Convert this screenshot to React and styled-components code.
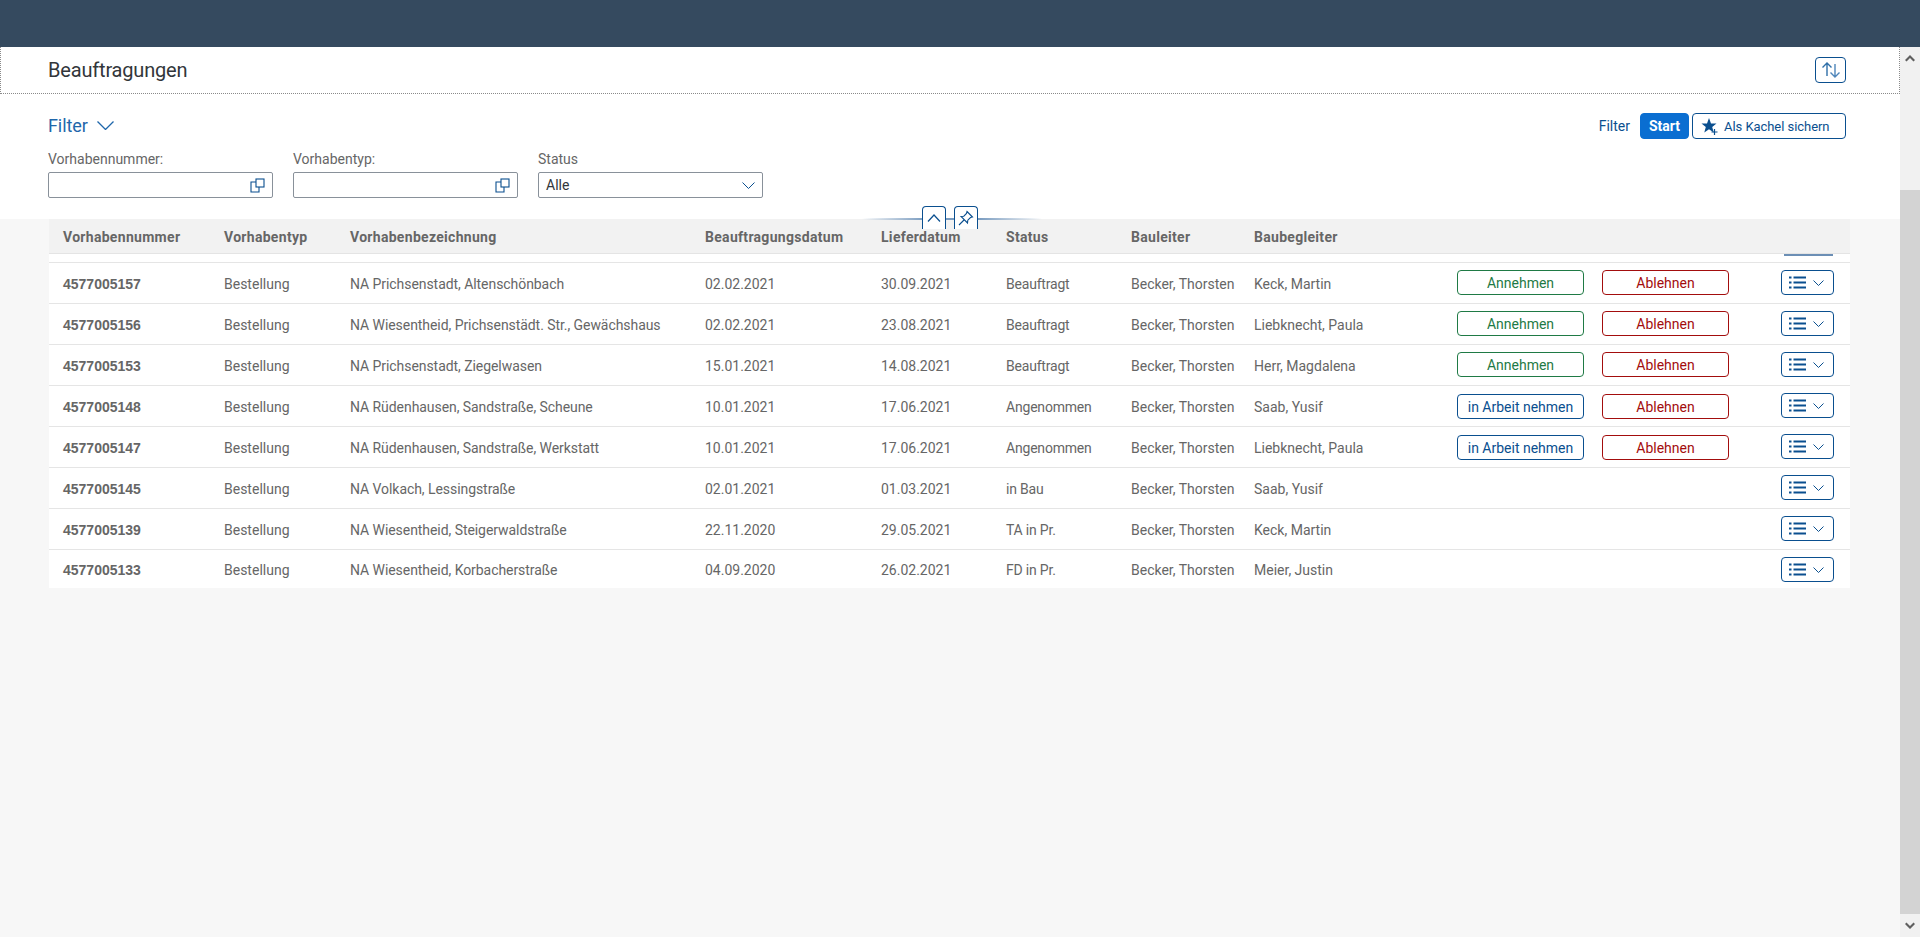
import React from "react";
import styled, { createGlobalStyle } from "styled-components";

const Global = createGlobalStyle`
  html, body { margin: 0; padding: 0; height: 100%; overflow: hidden; }
  body { font-family: "Roboto", "Liberation Sans", sans-serif; background: #f7f7f7; color: #32363a; }
  #root { height: 100%; }
  * { box-sizing: border-box; }
`;

const Page = styled.div`height: 937px; display: flex; flex-direction: column;`;
const Shell = styled.div`height: 47px; background: #354a5f; flex: none;`;
const Body = styled.div`flex: 1; display: flex; min-height: 0;`;
const Main = styled.main`flex: 1; min-width: 0; display: flex; flex-direction: column;`;

const Scrollbar = styled.div`width: 20px; background: #f1f1f1; display: flex; flex-direction: column; flex: none;`;
const ScrollBtn = styled.div`height: 23px; display: flex; align-items: center; justify-content: center; flex: none;`;
const ScrollSpace = styled.div`height: 120px; flex: none;`;
const Thumb = styled.div`flex: 1; background: #d3d3d3;`;

const TitleBar = styled.header`
  height: 47px; background: #fff; padding: 0 53px 0 47px; flex: none;
  display: flex; align-items: center; justify-content: space-between;
  border: 1px dotted #8a8a8a; border-top: none;
`;
const Title = styled.h1`margin: 0; font-size: 20px; font-weight: 400; color: #32363a; letter-spacing: -0.18px;`;
const IconButton = styled.button`
  width: 31px; height: 26px; padding: 0; background: #fff; border: 1px solid #0a4f8f; border-radius: 4px;
  display: flex; align-items: center; justify-content: center;
`;

const FilterBar = styled.section`background: #fff; height: 125px; padding: 19px 54px 0 48px; flex: none;`;
const FilterTop = styled.div`display: flex; align-items: center; justify-content: space-between; height: 26px;`;
const FilterHead = styled.div`display: flex; align-items: center; gap: 9px; font-size: 18px; color: #1f67ab; letter-spacing: -0.1px; margin-top: -1px;`;
const FilterActions = styled.div`display: flex; align-items: center; font-size: 14px;`;
const FilterLink = styled.span`color: #0a4f8f; margin-right: 10px;`;
const Start = styled.button`
  width: 49px; height: 26px; background: #0a6ed1; color: #fff; border: 1px solid #0a6ed1; border-radius: 4px;
  font: 700 14px "Roboto", sans-serif; padding: 0; margin-right: 3px;
`;
const TileButton = styled.button`
  width: 154px; height: 26px; background: #fff; color: #0a4f8f; border: 1px solid #0a4f8f; border-radius: 4px;
  font: 400 13px "Roboto", sans-serif; letter-spacing: -0.05px; padding: 0 0 0 8px; display: flex; align-items: center; gap: 5px;
`;
const Fields = styled.div`display: flex; gap: 20px; margin-top: 10px;`;
const Field = styled.div`width: 225px;`;
const FieldLabel = styled.label`display: block; font-size: 14px; color: #666; line-height: 20px; margin-bottom: 3px;`;
const Input = styled.div`
  height: 26px; border: 1px solid #89919a; border-radius: 2px; background: #fff;
  display: flex; align-items: center; justify-content: space-between; padding: 0 7px 0 7px;
  font-size: 14px; color: #32363a;
`;
const InputEnd = styled.div`margin-left: auto; display: flex;`;

const Content = styled.section`position: relative; flex: 1; padding: 0 50px 0 49px; min-height: 0;`;
const Collapse = styled.aside`
  position: absolute; top: -13px; left: 862px; width: 180px; height: 23px;
  display: flex; justify-content: center; gap: 8px; padding-right: 4px;
  &::before {
    content: ""; position: absolute; left: 0; right: 0; top: 12px; height: 2px;
    background: linear-gradient(90deg, rgba(88,133,180,0), #7a9cc0 35%, #7a9cc0 65%, rgba(88,133,180,0));
  }
`;
const CollapseBtn = styled.button`
  position: relative; width: 24px; height: 23px; padding: 0; background: #fff;
  border: 1px solid #0a4f8f; border-bottom: none; border-radius: 4px 4px 0 0;
  display: flex; align-items: center; justify-content: center;
`;

const Grid = `display: grid; grid-template-columns: 161px 126px 355px 176px 125px 125px 123px 203px 145px 179px 1fr;`;
const HeadRow = styled.div`
  ${Grid}
  height: 35px; background: #f2f2f2; border-bottom: 1px solid #e4e4e4; align-items: center; padding-left: 14px;
  font-size: 14px; font-weight: 700; color: #666; padding-top: 2px; letter-spacing: 0.3px;
`;
const CutRow = styled.div`
  height: 9px; background: #fff; border-bottom: 1px solid #e5e5e5;
  display: flex; justify-content: flex-end; padding-right: 17px;
`;
const CutBtn = styled.div`width: 49px; height: 2px; background: #6c8fb5;`;
const Row = styled.div`
  ${Grid}
  height: 41px; background: #fff; border-bottom: 1px solid #e5e5e5; align-items: center; padding-left: 14px;
  font-size: 14px; color: #666;
  &:last-of-type { border-bottom: none; height: 38px; }
`;
const Cell = styled.div`white-space: nowrap; padding-top: 2px; letter-spacing: ${p => p.$tight || 0}px;`;
const Key = styled(Cell)`font-family: "Liberation Sans", sans-serif; font-weight: 700;`;
const ActionCell = styled.div`display: flex; align-items: flex-start; height: 33px; padding-top: ${p => (p.$low ? 8 : 7)}px; align-self: start;`;
const Action = styled.button`
  width: 127px; height: 25px; background: #fff; border-radius: 4px; padding: 0;
  font: 400 14px "Roboto", sans-serif;
  border: 1px solid ${p => p.$color}; color: ${p => p.$color};
`;
const MenuButton = styled.button`
  width: 53px; height: 25px; background: #fff; border: 1px solid #0a4f8f; border-radius: 4px; padding: 0 0 0 7px;
  display: flex; align-items: center; gap: 7px;
`;

const ListIcon = () => (
  <svg width="17" height="13" viewBox="0 0 17 13" fill="#0a4f8f">
    <rect x="0" y="0.5" width="2.5" height="2" /><rect x="4.5" y="0.5" width="12.5" height="2" />
    <rect x="0" y="5.5" width="2.5" height="2" /><rect x="4.5" y="5.5" width="12.5" height="2" />
    <rect x="0" y="10.5" width="2.5" height="2" /><rect x="4.5" y="10.5" width="12.5" height="2" />
  </svg>
);
const Chevron = ({ w = 11, h = 6, color = "#0a4f8f", sw = 1 }) => (
  <svg width={w} height={h} viewBox={`0 0 ${w} ${h}`} fill="none" stroke={color} strokeWidth={sw}>
    <path d={`M0.5 0.5 L${w / 2} ${h - 0.5} L${w - 0.5} 0.5`} />
  </svg>
);
const ValueHelp = () => (
  <svg width="15" height="15" viewBox="0 0 15 15" fill="none" stroke="#0a4f8f" strokeWidth="1.1">
    <path d="M6 4 H1 V14 H9 V9" /><rect x="6" y="1" width="8" height="8" fill="#fff" />
  </svg>
);

const rows = [
  ["4577005157", "NA Prichsenstadt, Altenschönbach", "02.02.2021", "30.09.2021", "Beauftragt", "Keck, Martin"],
  ["4577005156", "NA Wiesentheid, Prichsenstädt. Str., Gewächshaus", "02.02.2021", "23.08.2021", "Beauftragt", "Liebknecht, Paula"],
  ["4577005153", "NA Prichsenstadt, Ziegelwasen", "15.01.2021", "14.08.2021", "Beauftragt", "Herr, Magdalena"],
  ["4577005148", "NA Rüdenhausen, Sandstraße, Scheune", "10.01.2021", "17.06.2021", "Angenommen", "Saab, Yusif"],
  ["4577005147", "NA Rüdenhausen, Sandstraße, Werkstatt", "10.01.2021", "17.06.2021", "Angenommen", "Liebknecht, Paula"],
  ["4577005145", "NA Volkach, Lessingstraße", "02.01.2021", "01.03.2021", "in Bau", "Saab, Yusif"],
  ["4577005139", "NA Wiesentheid, Steigerwaldstraße", "22.11.2020", "29.05.2021", "TA in Pr.", "Keck, Martin"],
  ["4577005133", "NA Wiesentheid, Korbacherstraße", "04.09.2020", "26.02.2021", "FD in Pr.", "Meier, Justin"],
];
const heads = ["Vorhabennummer", "Vorhabentyp", "Vorhabenbezeichnung", "Beauftragungsdatum", "Lieferdatum", "Status", "Bauleiter", "Baubegleiter"];

const GREEN = "#1f7a45", RED = "#a30d0d", BLUE = "#0a4f8f";

export default function App() {
  return (
    <Page>
      <Global />
      <Shell />
      <Body>
        <Main>
          <TitleBar>
            <Title>Beauftragungen</Title>
            <IconButton aria-label="Sortieren">
              <svg width="22" height="18" viewBox="0 0 22 18" fill="none" strokeWidth="1.4">
                <path d="M7 15 V2 M2.5 6.5 L7 2 L11.5 6.5" stroke="#2f6fa8" />
                <path d="M15 3 V16 M10.5 11.5 L15 16 L19.5 11.5" stroke="#4f86ba" />
              </svg>
            </IconButton>
          </TitleBar>
          <FilterBar>
            <FilterTop>
              <FilterHead>Filter <Chevron w={17} h={9} color="#1f67ab" sw={1.3} /></FilterHead>
              <FilterActions>
                <FilterLink>Filter</FilterLink>
                <Start>Start</Start>
                <TileButton>
                  <svg width="18" height="18" viewBox="0 0 18 18">
                    <path d="M8 1 L10 6.4 L15.5 6.6 L11.2 10 L12.7 15.4 L8 12.3 L3.3 15.4 L4.8 10 L0.5 6.6 L6 6.4 Z" fill="#0a4f8f" />
                    <path d="M13.5 12 V18 M10.5 15 H16.5" stroke="#0a4f8f" strokeWidth="1.2" fill="none" />
                  </svg>
                  Als Kachel sichern
                </TileButton>
              </FilterActions>
            </FilterTop>
            <Fields>
              <Field>
                <FieldLabel>Vorhabennummer:</FieldLabel>
                <Input><InputEnd><ValueHelp /></InputEnd></Input>
              </Field>
              <Field>
                <FieldLabel>Vorhabentyp:</FieldLabel>
                <Input><InputEnd><ValueHelp /></InputEnd></Input>
              </Field>
              <Field>
                <FieldLabel>Status</FieldLabel>
                <Input>Alle <Chevron w={13} h={7} /></Input>
              </Field>
            </Fields>
          </FilterBar>
          <Content>
            <HeadRow>{heads.map(h => <div key={h}>{h}</div>)}</HeadRow>
            <CutRow><CutBtn /></CutRow>
            {rows.map((r) => {
              const accepted = r[4] === "Angenommen";
              const open = r[4] === "Beauftragt";
              return (
                <Row key={r[0]}>
                  <Key>{r[0]}</Key>
                  <Cell>Bestellung</Cell>
                  <Cell $tight={-0.06}>{r[1]}</Cell>
                  <Cell>{r[2]}</Cell>
                  <Cell>{r[3]}</Cell>
                  <Cell $tight={-0.2}>{r[4]}</Cell>
                  <Cell>Becker, Thorsten</Cell>
                  <Cell>{r[5]}</Cell>
                  <ActionCell $low={accepted}>
                    {open && <Action $color={GREEN}>Annehmen</Action>}
                    {accepted && <Action $color={BLUE}>in Arbeit nehmen</Action>}
                  </ActionCell>
                  <ActionCell $low={accepted}>
                    {(open || accepted) && <Action $color={RED}>Ablehnen</Action>}
                  </ActionCell>
                  <ActionCell>
                    <MenuButton aria-label="Menü"><ListIcon /><Chevron w={11} h={6} /></MenuButton>
                  </ActionCell>
                </Row>
              );
            })}
            <Collapse>
              <CollapseBtn aria-label="Einklappen">
                <svg width="14" height="8" viewBox="0 0 14 8" fill="none" stroke="#0a4f8f" strokeWidth="1.2"><path d="M1 7.5 L7 1 L13 7.5" /></svg>
              </CollapseBtn>
              <CollapseBtn aria-label="Anheften">
                <svg width="16" height="16" viewBox="0 0 16 16" fill="none" stroke="#0a4f8f" strokeWidth="1.1">
                  <path d="M9 1.5 L14.5 7 L12.5 7.5 L9.8 10.2 L9.5 13 L3 6.5 L5.8 6.2 L8.5 3.5 Z M6 10 L1 15" />
                </svg>
              </CollapseBtn>
            </Collapse>
          </Content>
        </Main>
        <Scrollbar>
          <ScrollBtn><svg width="10" height="7" viewBox="0 0 10 7"><path d="M5 0 L10 5 L8.5 6.5 L5 3 L1.5 6.5 L0 5 Z" fill="#5f5f5f" /></svg></ScrollBtn>
          <ScrollSpace />
          <Thumb />
          <ScrollBtn><svg width="10" height="7" viewBox="0 0 10 7"><path d="M5 7 L0 2 L1.5 0.5 L5 4 L8.5 0.5 L10 2 Z" fill="#5f5f5f" /></svg></ScrollBtn>
        </Scrollbar>
      </Body>
    </Page>
  );
}
